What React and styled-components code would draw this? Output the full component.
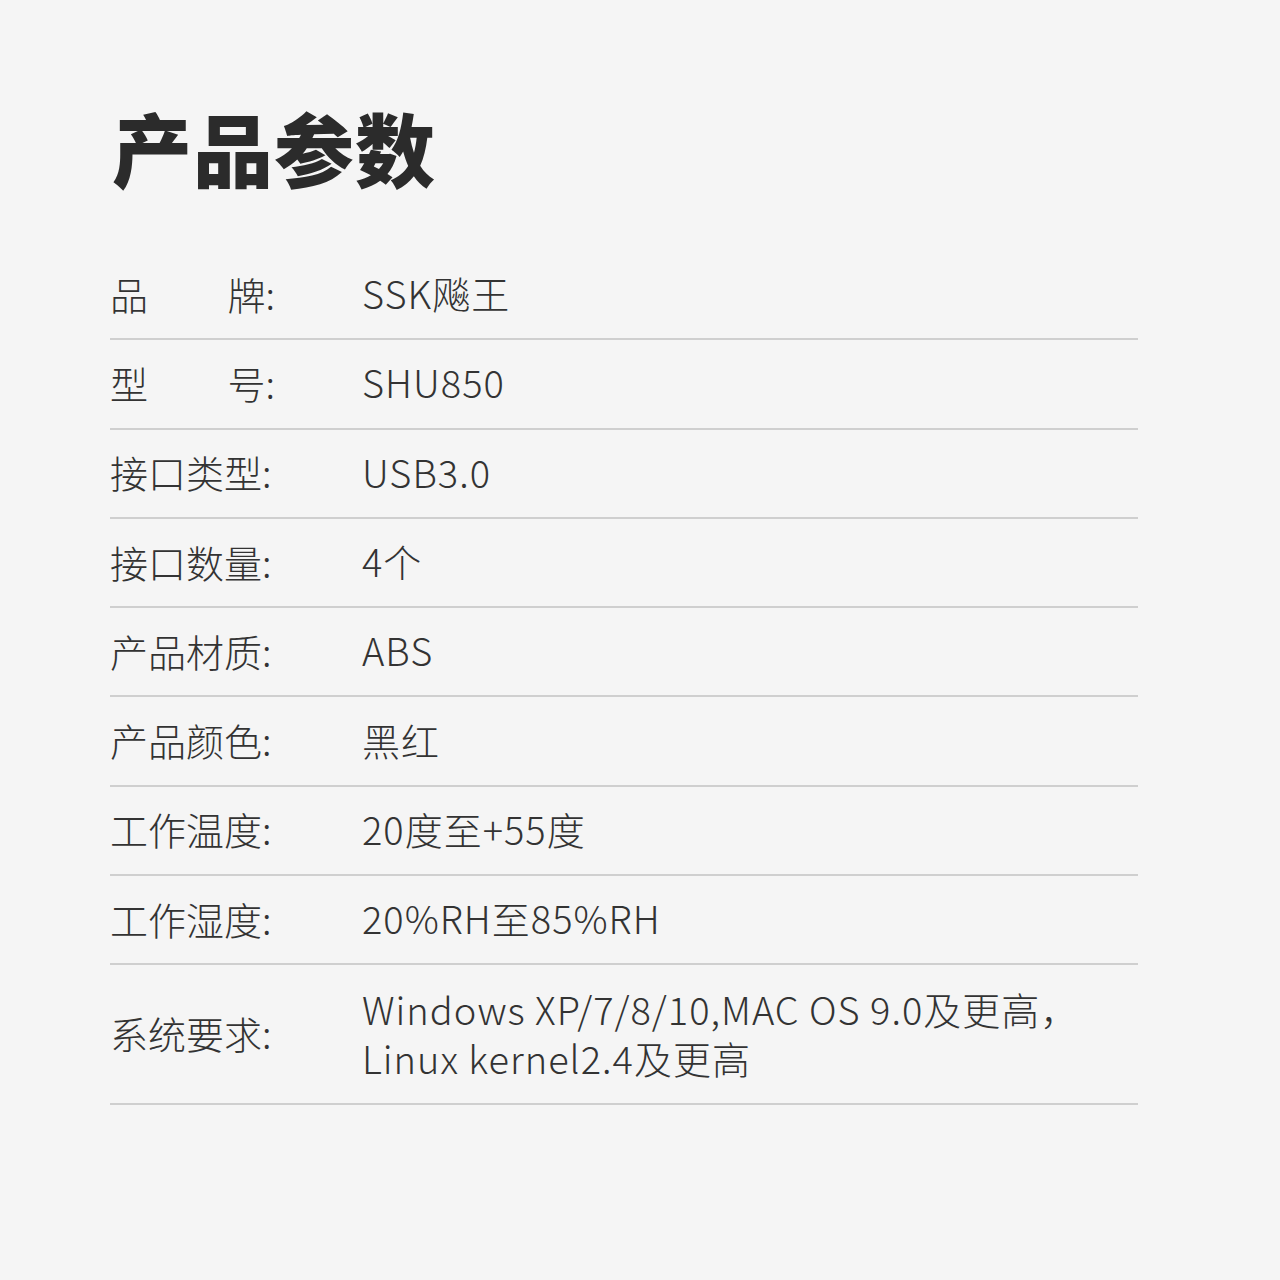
import React from "react";
import styled, { createGlobalStyle } from "styled-components";

const GlobalStyle = createGlobalStyle`
  html, body {
    margin: 0;
    padding: 0;
    background: #f5f5f5;
  }
  body {
    font-family: "Noto Sans CJK SC", "Noto Sans", sans-serif;
    color: #333;
  }
`;

const specs = [
    { label: ["品", "牌:"], value: "SSK飚王" },
    { label: ["型", "号:"], value: "SHU850" },
    { label: ["接口类型:"], value: "USB3.0" },
    { label: ["接口数量:"], value: "4个" },
    { label: ["产品材质:"], value: "ABS" },
    { label: ["产品颜色:"], value: "黑红" },
    { label: ["工作温度:"], value: "20度至+55度" },
    { label: ["工作湿度:"], value: "20%RH至85%RH" },
    { label: ["系统要求:"], value: ["Windows XP/7/8/10,MAC OS 9.0及更高，", "Linux kernel2.4及更高"] },
];

const App = () => {
    return (
        <>
            <GlobalStyle />
            <PageStyled>
                <TitleStyled>产品参数</TitleStyled>
                <ListStyled>
                    {specs.map((spec) => (
                        <RowStyled key={spec.label.join("")} $tall={Array.isArray(spec.value)}>
                            <LabelStyled>
                                {spec.label.map((part) => (
                                    <span key={part}>{part}</span>
                                ))}
                            </LabelStyled>
                            <ValueStyled>
                                {Array.isArray(spec.value)
                                    ? spec.value.map((line) => <ValueLineStyled key={line}>{line}</ValueLineStyled>)
                                    : spec.value}
                            </ValueStyled>
                        </RowStyled>
                    ))}
                </ListStyled>
            </PageStyled>
        </>
    );
};

const PageStyled = styled.div({
    width: "1280px",
    height: "1280px",
    boxSizing: "border-box",
    padding: "90px 142px 0 110px",
    background: "#f5f5f5",
});

const TitleStyled = styled.h1({
    margin: "0 0 0 2px",
    fontSize: "80px",
    lineHeight: "112px",
    fontWeight: 900,
    color: "#2b2b2b",
    letterSpacing: "1px",
});

const ListStyled = styled.div({
    marginTop: "49px",
    display: "flex",
    flexDirection: "column",
});

const RowStyled = styled.div`
    box-sizing: border-box;
    display: flex;
    align-items: center;
    height: ${(p) => (p.$tall ? "140px" : "89.3px")};
    padding-bottom: 3px;
    border-bottom: 2px solid #cfcfcf;
`;

const LabelStyled = styled.div({
    width: "165px",
    flexShrink: 0,
    display: "flex",
    justifyContent: "space-between",
    fontSize: "38px",
    fontWeight: 300,
    color: "#333",
    marginRight: "87px",
});

const ValueStyled = styled.div({
    fontSize: "38px",
    fontWeight: 300,
    lineHeight: "52px",
    letterSpacing: "1px",
    color: "#333",
});

const ValueLineStyled = styled.div({
    height: "49px",
    lineHeight: "49px",
});

export default App;
